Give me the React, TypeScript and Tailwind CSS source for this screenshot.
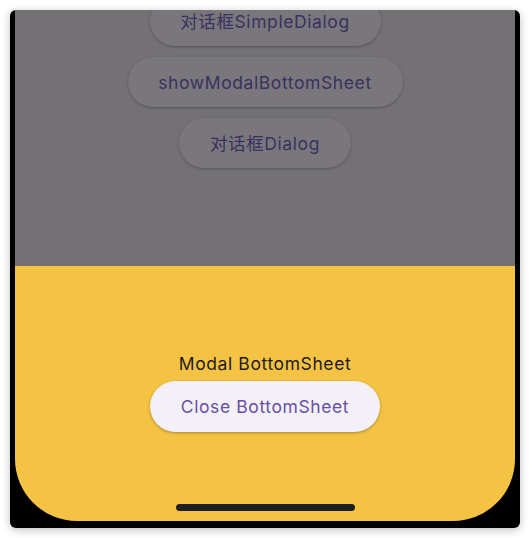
import React from "react";

const font = { fontFamily: '"Inter", "Noto Sans CJK SC", sans-serif' };

const DimButton = ({ label, w }: { label: string; w: string }) => (
  <div
    className={`h-[50px] ${w} rounded-full bg-[#79777b] shadow-[0_1px_3px_rgba(0,0,0,0.25)] flex items-center justify-center pt-[2px] text-[17.5px] text-[#3a3160] tracking-[0.6px]`}
  >
    {label}
  </div>
);

const App = () => {
  return (
    <div className="w-[530px] h-[538px] bg-white pt-[10px] px-[10px]" style={font}>
      <div className="w-[510px] h-[518px] bg-black rounded-[6px] shadow-[0_2px_8px_rgba(0,0,0,0.25)] px-[5px] pb-[7px]">
        <div className="w-[500px] h-[511px] rounded-b-[62px] overflow-hidden flex flex-col relative">
          <div className="h-[256px] bg-[#737174] flex flex-col items-center overflow-hidden">
            <div className="-mt-[14px] flex flex-col items-center gap-[11px]">
              <DimButton label="对话框SimpleDialog" w="w-[231px]" />
              <DimButton label="showModalBottomSheet" w="w-[275px]" />
              <DimButton label="对话框Dialog" w="w-[172px]" />
            </div>
          </div>
          <div className="flex-1 bg-[#f4c344] flex flex-col items-center pt-[87px]">
            <div className="text-[17.5px] leading-[22px] text-[#1d1b20] tracking-[0.6px]">Modal BottomSheet</div>
            <div className="mt-[6px] h-[51px] w-[230px] rounded-full bg-[#f4f0f8] shadow-[0_1px_3px_rgba(0,0,0,0.3)] flex items-center justify-center pt-[1px] text-[17.5px] text-[#6750a4] tracking-[0.6px]">
              Close BottomSheet
            </div>
          </div>
          <div className="absolute left-[161px] bottom-[10px] w-[179px] h-[7px] rounded-full bg-[#1e1e1e]" />
        </div>
      </div>
    </div>
  );
};

export default App;
